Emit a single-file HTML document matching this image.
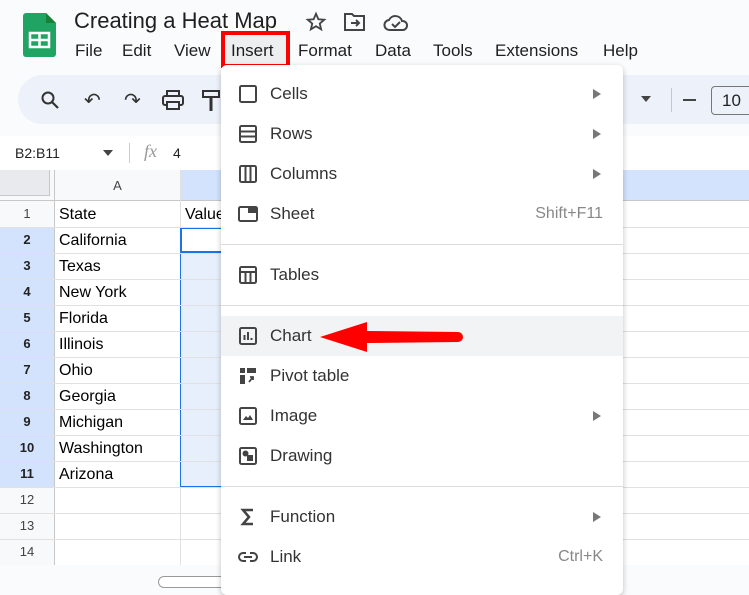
<!DOCTYPE html>
<html><head><style>
*{margin:0;padding:0;box-sizing:border-box}
body{width:749px;height:583px;overflow:hidden;background:#f9fbfd;font-family:"Liberation Sans",Arial,sans-serif;position:relative;color:#1f1f1f}
.a{position:absolute}
.menu span{position:absolute;top:41px;font-size:17px;color:#1f1f1f}
.grid{position:absolute;left:0;top:170px;width:749px;height:395px;background:#fff}
.hl{position:absolute;left:0;height:1px;background:#e1e1e1}
.rn{position:absolute;left:0;width:54px;text-align:center;font-size:13px;color:#444}
.cell{position:absolute;left:59px;font-size:16px;color:#000}
.dd{position:absolute;left:221px;top:65px;width:402px;height:530px;background:#fff;border-radius:6px;box-shadow:0 2px 6px rgba(0,0,0,.25)}
.it{position:absolute;left:0;width:402px;height:40px}
.it .t{position:absolute;left:49px;top:10px;font-size:17px;color:#333}
.it .s{position:absolute;right:20px;top:11px;font-size:16px;color:#888}
.it .ar{position:absolute;right:22px;top:15px;width:0;height:0;border-left:8px solid #777;border-top:5px solid transparent;border-bottom:5px solid transparent}
.it svg{position:absolute;left:17px;top:10px}
.sep{position:absolute;left:0;width:402px;height:1px;background:#dadce0}
</style></head><body>
<svg class="a" style="left:23px;top:13px" width="33" height="44" viewBox="0 0 33 44"><path d="M3 0h20l10 10v31a3 3 0 0 1-3 3H3a3 3 0 0 1-3-3V3a3 3 0 0 1 3-3z" fill="#1fa463"/><path d="M23 0v10h10z" fill="#188038"/><rect x="7" y="20" width="19" height="14" fill="none" stroke="#fff" stroke-width="2.5"/><path d="M7 27h19M16.5 20v14" stroke="#fff" stroke-width="2.5"/></svg>
<div class="a" style="left:74px;top:8px;font-size:22px;color:#1f1f1f">Creating a Heat Map</div>
<svg class="a" style="left:305px;top:11px" width="22" height="22" viewBox="0 0 24 24"><path d="M12 3l2.6 6 6.4.5-4.9 4.2 1.5 6.3L12 16.6 6.4 20l1.5-6.3L3 9.5l6.4-.5z" fill="none" stroke="#444" stroke-width="2"/></svg>
<svg class="a" style="left:344px;top:12px" width="22" height="20" viewBox="0 0 22 20"><path d="M1 2h7l2 2h10v14H1z" fill="none" stroke="#444" stroke-width="2"/><path d="M7 11h8M12 8l3 3-3 3" fill="none" stroke="#444" stroke-width="2"/></svg>
<svg class="a" style="left:383px;top:12px" width="26" height="20" viewBox="0 0 26 20"><path d="M7 18a5 5 0 0 1-1-10 7 7 0 0 1 13 1 4.5 4.5 0 0 1 1 9z" fill="none" stroke="#444" stroke-width="2"/><path d="M9 12l3 3 5-5" fill="none" stroke="#444" stroke-width="2"/></svg>
<div class="menu">
<span style="left:75px">File</span><span style="left:122px">Edit</span><span style="left:174px">View</span>
<span style="left:231px">Insert</span><span style="left:298px">Format</span><span style="left:375px">Data</span><span style="left:433px">Tools</span><span style="left:495px">Extensions</span><span style="left:603px">Help</span>
</div>
<div class="a" style="left:221px;top:31px;width:69px;height:37px;border:4px solid #f00;background:rgba(0,0,0,.05)"></div>
<div class="a" style="left:18px;top:75px;width:760px;height:49px;background:#edf2fa;border-radius:25px"></div>
<svg class="a" style="left:40px;top:90px" width="20" height="20" viewBox="0 0 20 20"><circle cx="8" cy="8" r="5.5" fill="none" stroke="#333" stroke-width="2"/><path d="M12 12l6 6" stroke="#333" stroke-width="2.2"/></svg>
<div class="a" style="left:84px;top:88px;font-size:20px;color:#333">↶</div>
<div class="a" style="left:124px;top:88px;font-size:20px;color:#333">↷</div>
<svg class="a" style="left:162px;top:90px" width="22" height="20" viewBox="0 0 22 20"><rect x="5" y="1" width="12" height="5" fill="none" stroke="#333" stroke-width="2"/><rect x="1" y="6" width="20" height="9" rx="2" fill="none" stroke="#333" stroke-width="2"/><rect x="5" y="12" width="12" height="7" fill="#edf2fa" stroke="#333" stroke-width="2"/></svg>
<svg class="a" style="left:202px;top:90px" width="18" height="22" viewBox="0 0 18 22"><rect x="1" y="1" width="16" height="6" fill="none" stroke="#333" stroke-width="2"/><path d="M9 7v5M9 12v9" stroke="#333" stroke-width="3"/></svg>
<div class="a" style="left:641px;top:96px;border-top:6px solid #444;border-left:5px solid transparent;border-right:5px solid transparent"></div>
<div class="a" style="left:671px;top:88px;width:1px;height:24px;background:#c4c7c5"></div>
<div class="a" style="left:683px;top:99px;width:13px;height:2px;background:#444"></div>
<div class="a" style="left:711px;top:86px;width:50px;height:29px;border:1px solid #777;border-radius:4px;font-size:17px;padding:4px 0 0 10px;color:#222">10</div>
<div class="a" style="left:0;top:136px;width:749px;height:34px;background:#fff"></div>
<div class="a" style="left:15px;top:145px;font-size:14px;color:#222">B2:B11</div>
<div class="a" style="left:103px;top:150px;border-top:6px solid #444;border-left:5px solid transparent;border-right:5px solid transparent"></div>
<div class="a" style="left:129px;top:143px;width:1px;height:20px;background:#ccc"></div>
<div class="a" style="left:144px;top:141px;font-size:18px;color:#999;font-style:italic;font-family:'Liberation Serif',serif">fx</div>
<div class="a" style="left:173px;top:145px;font-size:14px;color:#222">4</div>
<div class="grid">
<div class="a" style="left:0;top:0;width:54px;height:30px;background:#f8f9fa"></div>
<div class="a" style="left:0;top:0;width:50px;height:26px;background:#e8eaed;border-right:1px solid #c7c7c7;border-bottom:1px solid #c7c7c7"></div>
<div class="a" style="left:55px;top:0;width:125px;height:30px;background:#f8f9fa;text-align:center;font-size:13px;padding-top:8px;color:#444">A</div>
<div class="a" style="left:181px;top:0;width:600px;height:30px;background:#d3e3fd"></div>
<div class="a" style="left:0;top:30px;width:749px;height:1px;background:#c7c7c7"></div>
<div class="a" style="left:0;top:31px;width:54px;height:364px;background:#f8f9fa"></div>
<div class="a" style="left:0;top:57px;width:54px;height:260px;background:#d3e3fd"></div>
<div class="a" style="left:54px;top:0;width:1px;height:395px;background:#c7c7c7"></div>
<div class="a" style="left:180px;top:0;width:1px;height:395px;background:#e1e1e1"></div>
<div class="a" style="left:180px;top:57px;width:60px;height:260px;background:#e8effc;border:1px solid #1a73e8"></div>
<div class="a" style="left:180px;top:57px;width:60px;height:26px;background:#fff;border:2px solid #1a73e8"></div>
<div class="hl" style="top:57px;width:749px"></div><div class="hl" style="top:83px;width:749px"></div><div class="hl" style="top:109px;width:749px"></div><div class="hl" style="top:135px;width:749px"></div><div class="hl" style="top:161px;width:749px"></div><div class="hl" style="top:187px;width:749px"></div><div class="hl" style="top:213px;width:749px"></div><div class="hl" style="top:239px;width:749px"></div><div class="hl" style="top:265px;width:749px"></div><div class="hl" style="top:291px;width:749px"></div><div class="hl" style="top:317px;width:749px"></div><div class="hl" style="top:343px;width:749px"></div><div class="hl" style="top:369px;width:749px"></div>
<div class="rn" style="top:36px">1</div><div class="rn" style="top:62px;font-weight:bold;color:#222">2</div><div class="rn" style="top:88px;font-weight:bold;color:#222">3</div><div class="rn" style="top:114px;font-weight:bold;color:#222">4</div><div class="rn" style="top:140px;font-weight:bold;color:#222">5</div><div class="rn" style="top:166px;font-weight:bold;color:#222">6</div><div class="rn" style="top:192px;font-weight:bold;color:#222">7</div><div class="rn" style="top:218px;font-weight:bold;color:#222">8</div><div class="rn" style="top:244px;font-weight:bold;color:#222">9</div><div class="rn" style="top:270px;font-weight:bold;color:#222">10</div><div class="rn" style="top:296px;font-weight:bold;color:#222">11</div><div class="rn" style="top:322px">12</div><div class="rn" style="top:348px">13</div><div class="rn" style="top:374px">14</div>
<div class="cell" style="top:36px">State</div><div class="cell" style="left:185px;top:36px">Value</div>
<div class="cell" style="top:62px">California</div><div class="cell" style="top:88px">Texas</div><div class="cell" style="top:114px">New York</div><div class="cell" style="top:140px">Florida</div><div class="cell" style="top:166px">Illinois</div><div class="cell" style="top:192px">Ohio</div><div class="cell" style="top:218px">Georgia</div><div class="cell" style="top:244px">Michigan</div><div class="cell" style="top:270px">Washington</div><div class="cell" style="top:296px">Arizona</div>
</div>
<div class="a" style="left:158px;top:576px;width:70px;height:12px;border:1px solid #999;border-radius:6px;background:#fff"></div>
<div class="dd">
<div class="it" style="top:9px"><svg width="20" height="20"><rect x="2" y="2" width="16" height="16" rx="1.5" fill="none" stroke="#444" stroke-width="2"/></svg><span class="t">Cells</span><i class="ar"></i></div>
<div class="it" style="top:49px"><svg width="20" height="20"><rect x="2" y="2" width="16" height="16" rx="1.5" fill="none" stroke="#444" stroke-width="2"/><path d="M2 7.5h16M2 12.5h16" stroke="#444" stroke-width="2"/></svg><span class="t">Rows</span><i class="ar"></i></div>
<div class="it" style="top:89px"><svg width="20" height="20"><rect x="2" y="2" width="16" height="16" rx="1.5" fill="none" stroke="#444" stroke-width="2"/><path d="M7.5 2v16M12.5 2v16" stroke="#444" stroke-width="2"/></svg><span class="t">Columns</span><i class="ar"></i></div>
<div class="it" style="top:129px"><svg width="20" height="20"><rect x="1" y="3" width="18" height="14" rx="1.5" fill="none" stroke="#444" stroke-width="2"/><rect x="10" y="3" width="9" height="6" fill="#444"/></svg><span class="t">Sheet</span><span class="s">Shift+F11</span></div>
<div class="sep" style="top:179px"></div>
<div class="it" style="top:190px"><svg width="20" height="20"><rect x="2" y="2" width="16" height="16" rx="1.5" fill="none" stroke="#444" stroke-width="2"/><path d="M2 7h16M7.5 7v11M12.5 7v11" stroke="#444" stroke-width="2"/></svg><span class="t">Tables</span></div>
<div class="sep" style="top:240px"></div>
<div class="it" style="top:251px;background:#f1f3f4"><svg width="20" height="20"><rect x="2" y="2" width="16" height="16" rx="1.5" fill="none" stroke="#444" stroke-width="2"/><path d="M6.5 14V9M10 14V6M13.5 14v-2" stroke="#444" stroke-width="2"/></svg><span class="t">Chart</span></div>
<div class="it" style="top:291px"><svg width="20" height="20"><rect x="2" y="2" width="5" height="5" fill="#444"/><rect x="9" y="2" width="9" height="5" fill="#444"/><rect x="2" y="9" width="5" height="9" fill="#444"/><path d="M11 16l4-5M12 11h3v3" fill="none" stroke="#444" stroke-width="1.8"/></svg><span class="t">Pivot table</span></div>
<div class="it" style="top:331px"><svg width="20" height="20"><rect x="2" y="2" width="16" height="16" rx="1.5" fill="none" stroke="#444" stroke-width="2"/><path d="M5 14l3-4 2 2 2-3 3 5z" fill="#444"/></svg><span class="t">Image</span><i class="ar"></i></div>
<div class="it" style="top:371px"><svg width="20" height="20"><rect x="2" y="2" width="16" height="16" rx="1.5" fill="none" stroke="#444" stroke-width="2"/><circle cx="7.5" cy="7.5" r="3" fill="#444"/><rect x="9" y="9" width="6" height="6" fill="#444"/></svg><span class="t">Drawing</span></div>
<div class="sep" style="top:421px"></div>
<div class="it" style="top:432px"><svg width="20" height="20"><path d="M15 3H5l6 7-6 7h10" fill="none" stroke="#444" stroke-width="2.5"/></svg><span class="t">Function</span><i class="ar"></i></div>
<div class="it" style="top:472px"><svg width="20" height="20"><path d="M8 6H5a4 4 0 0 0 0 8h3M12 6h3a4 4 0 0 1 0 8h-3M6 10h8" fill="none" stroke="#444" stroke-width="2"/></svg><span class="t">Link</span><span class="s">Ctrl+K</span></div>
</div>
<svg class="a" style="left:318px;top:320px" width="148" height="35" viewBox="0 0 148 35"><path d="M2 17L49 2v9l91 1a5 5 0 0 1 0 10l-91 1v9z" fill="#f00"/></svg>
</body></html>
